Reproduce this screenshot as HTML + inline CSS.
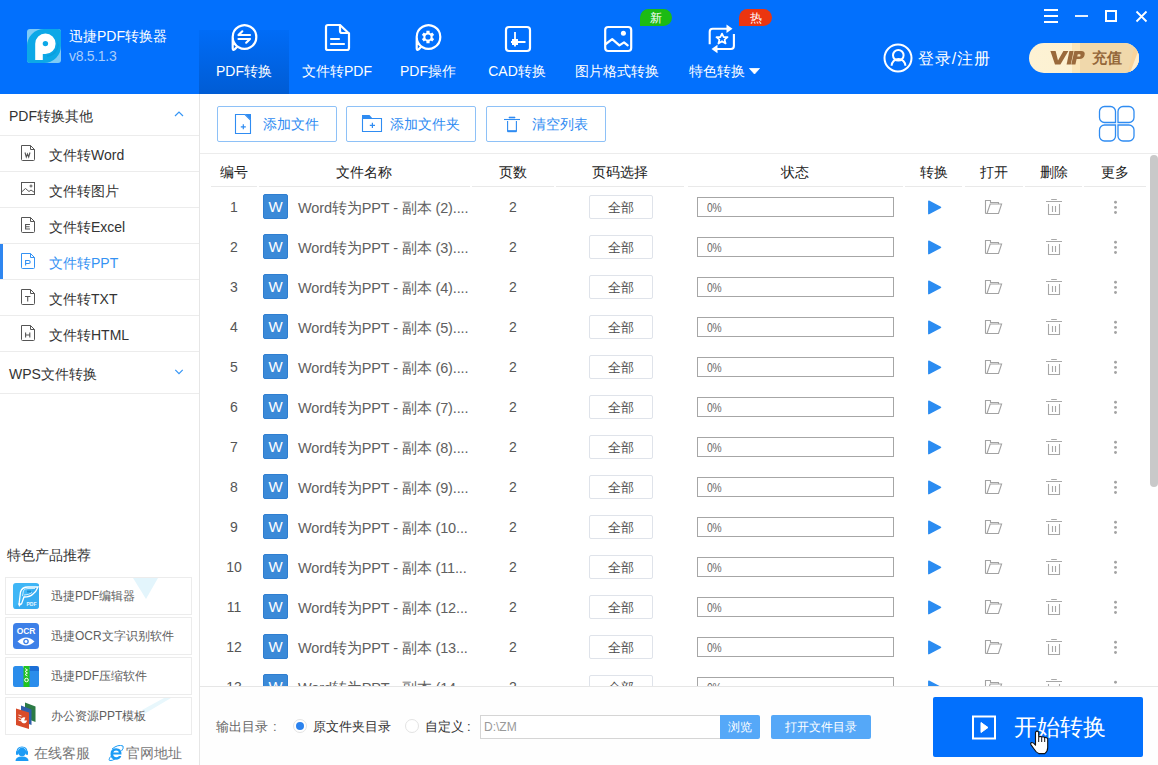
<!DOCTYPE html><html><head><meta charset="utf-8"><style>
*{box-sizing:border-box;margin:0;padding:0}
html,body{width:1158px;height:765px;overflow:hidden;background:#fff;font-family:"Liberation Sans",sans-serif;position:relative}
.a{position:absolute}
.nw{white-space:nowrap}
</style></head><body>
<div class="a" style="left:0;top:0;width:1158px;height:94px;background:#0270fd"></div>
<div class="a" style="left:199px;top:30px;width:90px;height:64px;background:linear-gradient(#006cf7,#005cd4)"></div>
<svg class="a" style="left:27px;top:29px" width="34" height="34" viewBox="0 0 34 34">
<defs><clipPath id="lc"><rect width="34" height="34" rx="3"/></clipPath></defs>
<g clip-path="url(#lc)"><rect width="34" height="34" fill="#7ecbf5"/>
<circle cx="17" cy="17" r="17" fill="#0ca8e7"/><rect x="17" y="0" width="17" height="17" fill="#0ca8e7"/><rect x="0" y="17" width="17" height="17" fill="#0ca8e7"/>
<path d="M20 26A11 11 0 0 0 30 12L32 16A13 13 0 0 1 20 28Z" fill="#0a98d8" opacity="0.6"/>
<path d="M8.2 31V14.8A10.2 10.2 0 1 1 18.4 25H15.8V31Z" fill="#fff"/>
<circle cx="18.4" cy="14.6" r="2.7" fill="#0ca8e7"/>
</g></svg>
<div class="a nw" style="left:69px;top:27px;font-size:14px;line-height:18px;color:#fff">迅捷PDF转换器</div>
<div class="a nw" style="left:69px;top:47px;font-size:14px;line-height:18px;letter-spacing:-0.3px;color:#a9cdfb">v8.5.1.3</div>
<div class="a nw" style="left:184px;top:62px;width:120px;text-align:center;font-size:14px;line-height:18px;color:#fff">PDF转换</div>
<div class="a nw" style="left:277px;top:62px;width:120px;text-align:center;font-size:14px;line-height:18px;color:#fff">文件转PDF</div>
<div class="a nw" style="left:368px;top:62px;width:120px;text-align:center;font-size:14px;line-height:18px;color:#fff">PDF操作</div>
<div class="a nw" style="left:457px;top:62px;width:120px;text-align:center;font-size:14px;line-height:18px;color:#fff">CAD转换</div>
<div class="a nw" style="left:557px;top:62px;width:120px;text-align:center;font-size:14px;line-height:18px;color:#fff">图片格式转换</div>
<div class="a nw" style="left:657px;top:62px;width:120px;text-align:center;font-size:14px;line-height:18px;color:#fff">特色转换</div>
<svg class="a" style="left:749px;top:68px" width="11" height="7"><path d="M0.5 0.5H10.5L5.5 6Z" stroke="#fff" stroke-width="0.8" stroke-linejoin="round" fill="#fff"/></svg>
<svg class="a" style="left:229px;top:22px" width="30" height="30" viewBox="0 0 30 30">
<path d="M3.7 15A11.8 11.8 0 1 1 3.7 15.01M3.7 15V26.3Q3.7 28.6 5.6 27.4L8.2 24.8" fill="none" stroke="#fff" stroke-width="2.2" stroke-linecap="round" stroke-linejoin="round"/>
<path d="M9.5 13H21M9.5 13L13.3 9.3M21 17H9.5M21 17L17.2 20.7" fill="none" stroke="#fff" stroke-width="2.2" stroke-linecap="round" stroke-linejoin="round"/></svg>
<svg class="a" style="left:323px;top:22px" width="28" height="30" viewBox="0 0 28 30">
<path d="M17 3H5Q3 3 3 5V26.5Q3 28 5 28H24Q26 28 26 26V11.5Z" fill="none" stroke="#fff" stroke-width="2.2" stroke-linecap="round" stroke-linejoin="round"/>
<path d="M17 3.5V9Q17 11 19 11H25.5" fill="none" stroke="#fff" stroke-width="2.2" stroke-linecap="round" stroke-linejoin="round"/>
<path d="M8 17H16M8 22H21" fill="none" stroke="#fff" stroke-width="2.2" stroke-linecap="round" stroke-linejoin="round"/></svg>
<svg class="a" style="left:413px;top:22px" width="30" height="30" viewBox="0 0 30 30">
<path d="M3.7 15A11.8 11.8 0 1 1 3.7 15.01M3.7 15V26.3Q3.7 28.6 5.6 27.4L8.2 24.8" fill="none" stroke="#fff" stroke-width="2.2" stroke-linecap="round" stroke-linejoin="round"/>
<g transform="translate(15,15)" fill="#fff">
<path d="M-1.6 -6.2H1.6V-4.2A4.5 4.5 0 0 1 2.8 -3.5L4.3 -4.6L6.2 -2.1L4.6 -0.9A4.5 4.5 0 0 1 4.6 0.9L6.2 2.1L4.3 4.6L2.8 3.5A4.5 4.5 0 0 1 1.6 4.2V6.2H-1.6V4.2A4.5 4.5 0 0 1 -2.8 3.5L-4.3 4.6L-6.2 2.1L-4.6 0.9A4.5 4.5 0 0 1 -4.6 -0.9L-6.2 -2.1L-4.3 -4.6L-2.8 -3.5A4.5 4.5 0 0 1 -1.6 -4.2Z"/>
<circle r="2.6" fill="#0270fd"/></g></svg>
<svg class="a" style="left:502px;top:22px" width="30" height="32" viewBox="0 0 30 32">
<rect x="4" y="5" width="24" height="24" rx="3" fill="none" stroke="#fff" stroke-width="2.2" stroke-linecap="round" stroke-linejoin="round"/>
<path d="M13 10V24.5M9 20H23.5" fill="none" stroke="#fff" stroke-width="1.8"/>
<rect x="10" y="17" width="6" height="6" fill="#fff"/></svg>
<svg class="a" style="left:602px;top:22px" width="32" height="32" viewBox="0 0 32 32">
<rect x="3.2" y="5" width="26" height="24" rx="3" fill="none" stroke="#fff" stroke-width="2.2" stroke-linecap="round" stroke-linejoin="round"/>
<path d="M3.8 22L10.2 17.2L17.4 23.4L22 20.3L25.7 23.4" fill="none" stroke="#fff" stroke-width="2.2" stroke-linecap="round" stroke-linejoin="round"/>
<circle cx="21.4" cy="11.3" r="2.5" fill="#fff"/></svg>
<svg class="a" style="left:706px;top:22px" width="32" height="32" viewBox="0 0 32 32">
<path d="M3.7 22.3V9.8Q3.7 6.8 6.7 6.8H21" fill="none" stroke="#fff" stroke-width="2.1"/>
<path d="M20.5 2.5L26.5 6.8L20.5 11Z" fill="#fff"/>
<path d="M27.9 12V24Q27.9 27 24.9 27H11" fill="none" stroke="#fff" stroke-width="2.1"/>
<path d="M11.5 22.7L5.5 27L11.5 31.3Z" fill="#fff"/>
<path d="M16 11.6L17.7 15.2H21.6L18.6 17.6L19.6 21.5L16 19.2L12.4 21.5L13.4 17.6L10.4 15.2H14.3Z" fill="none" stroke="#fff" stroke-width="1.7" stroke-linejoin="round"/></svg>
<div class="a" style="left:640px;top:9px;width:32px;height:17px;background:#1cbb14;border-radius:9px 9px 9px 0;color:#fff;font-size:12px;line-height:18px;text-align:center">新</div>
<div class="a" style="left:739px;top:9px;width:33px;height:17px;background:#eb3510;border-radius:9px 9px 9px 0;color:#fff;font-size:12px;line-height:18px;text-align:center">热</div>
<svg class="a" style="left:1040px;top:6px" width="115" height="22" viewBox="0 0 115 22" fill="none" stroke="#fff" stroke-width="2">
<path d="M4 4H18M4 10H18M4 16H18" stroke-width="1.8"/>
<path d="M35 10H48" stroke-width="1.8"/>
<rect x="66" y="5" width="10" height="10" stroke-width="2"/>
<path d="M96.5 5.5L106.5 15.5M106.5 5.5L96.5 15.5" stroke-width="1.8"/></svg>
<svg class="a" style="left:883px;top:43px" width="30" height="30" viewBox="0 0 30 30" fill="none" stroke="#fff" stroke-width="2">
<circle cx="15" cy="15" r="13.5"/><circle cx="15.3" cy="12.2" r="5.3"/><path d="M8.6 22.8A6.9 6.9 0 0 1 22.4 22.8"/></svg>
<div class="a nw" style="left:918px;top:49px;font-size:16px;line-height:20px;letter-spacing:0.9px;color:#fff">登录/注册</div>
<svg class="a" style="left:1029px;top:43px" width="110" height="30" viewBox="0 0 110 30">
<defs><clipPath id="vc"><rect width="110" height="30" rx="15"/></clipPath>
<linearGradient id="vg" x1="0" x2="1"><stop offset="0" stop-color="#fdf2d4"/><stop offset="1" stop-color="#fcf0cf"/></linearGradient></defs>
<g clip-path="url(#vc)"><rect width="110" height="30" fill="url(#vg)"/>
<path d="M43 0H110V30H43Z" fill="#f0d8ab"/>
<path d="M43 0H51V30H43Z" fill="#fae5b9"/>
<path d="M98.6 30L106.4 0H110V30Z" fill="#f8d49c"/>
<path d="M101 30L110 6V30Z" fill="#fcefd3"/>
</g></svg>
<svg class="a" style="left:1049px;top:50px" width="40" height="16" viewBox="0 0 40 16" fill="#9a6a3c">
<path d="M1.4 1H6.6L9 10.6L14.4 1H19.4L11.4 14.4H6Z"/>
<path d="M20.4 1H24.6L21.8 14.4H17.6Z"/>
<path d="M25.4 1H32.2Q36.4 1 35.6 5Q34.8 9 30.4 9H27.6L26.4 14.4H22.2ZM28.8 4.2L28.2 6.6H30.2Q31.4 6.6 31.6 5.4Q31.8 4.2 30.6 4.2Z" fill-rule="evenodd"/></svg>
<div class="a nw" style="left:1092px;top:48px;font-size:14.5px;line-height:20px;color:#94673a;font-weight:bold">充值</div>
<div class="a" style="left:199px;top:94px;width:1px;height:671px;background:#e6e6e6"></div>
<div class="a nw" style="left:9px;top:107px;font-size:14px;line-height:18px;color:#333">PDF转换其他</div>
<svg class="a" style="left:173px;top:109px" width="12" height="10"><path d="M2 7L6 3L10 7" fill="none" stroke="#3595f5" stroke-width="1.2"/></svg>
<div class="a" style="left:0;top:135px;width:199px;height:1px;background:#ececec"></div>
<div class="a" style="left:0;top:171px;width:199px;height:1px;background:#ececec"></div>
<div class="a" style="left:0;top:207px;width:199px;height:1px;background:#ececec"></div>
<div class="a" style="left:0;top:243px;width:199px;height:1px;background:#ececec"></div>
<div class="a" style="left:0;top:279px;width:199px;height:1px;background:#ececec"></div>
<div class="a" style="left:0;top:315px;width:199px;height:1px;background:#ececec"></div>
<div class="a" style="left:0;top:351px;width:199px;height:1px;background:#ececec"></div>
<div class="a nw" style="left:49px;top:146px;font-size:14px;line-height:18px;color:#333">文件转Word</div>
<svg class="a" style="left:20px;top:144px" width="16" height="18" viewBox="0 0 16 18" fill="none" stroke="#555" stroke-width="1">
<path d="M1.5 1.5H10.5L14.5 5.5V15.5Q14.5 16.5 13.5 16.5H2.5Q1.5 16.5 1.5 15.5Z"/><path d="M10.5 1.5V5.5H14.5"/><path d="M5 8.5L6.3 13L7.5 10L8.7 13L10 8.5" stroke-width="1.1"/></svg>
<div class="a nw" style="left:49px;top:182px;font-size:14px;line-height:18px;color:#333">文件转图片</div>
<svg class="a" style="left:20px;top:181px" width="16" height="16" viewBox="0 0 16 16" fill="none" stroke="#555" stroke-width="1">
<rect x="1.5" y="1.5" width="13" height="12"/><path d="M1.5 11L5.5 7.5L9 10.5L11 9L14.5 11.5"/><circle cx="11" cy="5" r="1"/></svg>
<div class="a nw" style="left:49px;top:218px;font-size:14px;line-height:18px;color:#333">文件转Excel</div>
<svg class="a" style="left:20px;top:216px" width="16" height="18" viewBox="0 0 16 18" fill="none" stroke="#555" stroke-width="1">
<path d="M1.5 1.5H10.5L14.5 5.5V15.5Q14.5 16.5 13.5 16.5H2.5Q1.5 16.5 1.5 15.5Z"/><path d="M10.5 1.5V5.5H14.5"/><path d="M10 8.5H5.6V13H10M5.6 10.7H9.6" stroke-width="1.1"/></svg>
<div class="a nw" style="left:49px;top:254px;font-size:14px;line-height:18px;color:#3592f3">文件转PPT</div>
<svg class="a" style="left:20px;top:252px" width="16" height="18" viewBox="0 0 16 18" fill="none" stroke="#3592f3" stroke-width="1">
<path d="M1.5 1.5H10.5L14.5 5.5V15.5Q14.5 16.5 13.5 16.5H2.5Q1.5 16.5 1.5 15.5Z"/><path d="M10.5 1.5V5.5H14.5"/><path d="M5.6 13.5V8.5H8.6Q10.2 8.5 10.2 10Q10.2 11.5 8.6 11.5H5.6" stroke-width="1.1"/></svg>
<div class="a" style="left:0;top:244px;width:3px;height:35px;background:#2f86f0"></div>
<div class="a nw" style="left:49px;top:290px;font-size:14px;line-height:18px;color:#333">文件转TXT</div>
<svg class="a" style="left:20px;top:288px" width="16" height="18" viewBox="0 0 16 18" fill="none" stroke="#555" stroke-width="1">
<path d="M1.5 1.5H10.5L14.5 5.5V15.5Q14.5 16.5 13.5 16.5H2.5Q1.5 16.5 1.5 15.5Z"/><path d="M10.5 1.5V5.5H14.5"/><path d="M5 8.5H10.4M7.7 8.5V13.5" stroke-width="1.1"/></svg>
<div class="a nw" style="left:49px;top:326px;font-size:14px;line-height:18px;color:#333">文件转HTML</div>
<svg class="a" style="left:20px;top:324px" width="16" height="18" viewBox="0 0 16 18" fill="none" stroke="#555" stroke-width="1">
<path d="M1.5 1.5H10.5L14.5 5.5V15.5Q14.5 16.5 13.5 16.5H2.5Q1.5 16.5 1.5 15.5Z"/><path d="M10.5 1.5V5.5H14.5"/><path d="M5.6 8.5V13.5M9.8 8.5V13.5M5.6 11H9.8" stroke-width="1.1"/></svg>
<div class="a nw" style="left:9px;top:365px;font-size:14px;line-height:18px;color:#333">WPS文件转换</div>
<svg class="a" style="left:173px;top:367px" width="12" height="10"><path d="M2.3 2.8L6 6.6L9.7 2.8" fill="none" stroke="#3595f5" stroke-width="1.2"/></svg>
<div class="a" style="left:0;top:393px;width:199px;height:1px;background:#ececec"></div>
<div class="a nw" style="left:7px;top:546px;font-size:14px;line-height:18px;color:#333">特色产品推荐</div>
<svg class="a" style="left:130px;top:577px" width="50" height="140" viewBox="0 0 50 140"><path d="M3 1H28L16 22Z" fill="#e3f5fc"/><path d="M14 137L41 121H34L12 133Z" fill="#e8f7fc"/></svg>
<div class="a" style="left:5px;top:577px;width:187px;height:38px;border:1px solid #ececec"></div>
<div class="a nw" style="left:51px;top:588px;font-size:12px;line-height:17px;color:#5e5e5e">迅捷PDF编辑器</div>
<div class="a" style="left:5px;top:617px;width:187px;height:38px;border:1px solid #ececec"></div>
<div class="a nw" style="left:51px;top:628px;font-size:12px;line-height:17px;color:#5e5e5e">迅捷OCR文字识别软件</div>
<div class="a" style="left:5px;top:657px;width:187px;height:38px;border:1px solid #ececec"></div>
<div class="a nw" style="left:51px;top:668px;font-size:12px;line-height:17px;color:#5e5e5e">迅捷PDF压缩软件</div>
<div class="a" style="left:5px;top:697px;width:187px;height:38px;border:1px solid #ececec"></div>
<div class="a nw" style="left:51px;top:708px;font-size:12px;line-height:17px;color:#5e5e5e">办公资源PPT模板</div>
<svg class="a" style="left:13px;top:583px" width="26" height="26" viewBox="0 0 26 26">
<defs><clipPath id="p1"><rect width="26" height="26" rx="3"/></clipPath></defs>
<g clip-path="url(#p1)"><rect width="26" height="26" fill="#3fb6f6"/><path d="M0 26L26 0V26Z" fill="#35a8ef" opacity="0.7"/></g>
<path d="M6 21.5L7.5 9Q9 4 15 4H25Q23 9 20 11Q17 14 11 14L8.5 21Z" fill="none" stroke="#fff" stroke-width="1.3"/>
<path d="M9.5 13L10.5 7.5Q12 5.5 15 5.5H22M11 12Q16 12 19 9.5" fill="none" stroke="#d8f1ff" stroke-width="0.9"/>
<rect x="14" y="7.5" width="4" height="2" fill="#1d8fd0"/>
<path d="M5.5 20L8.5 21L6 24Z" fill="#fff"/>
<text x="13.5" y="23" font-size="5" fill="#e8f6ff" font-family="Liberation Sans" font-weight="bold">PDF</text></svg>
<svg class="a" style="left:13px;top:623px" width="26" height="26" viewBox="0 0 26 26"><rect width="26" height="26" rx="3.5" fill="#3d80e8"/>
<text x="13" y="10.5" text-anchor="middle" font-size="8.5" fill="#fff" font-family="Liberation Sans" font-weight="bold" letter-spacing="-0.2">OCR</text>
<path d="M4.5 18.5Q13 10.5 21.5 18.5Q13 26.5 4.5 18.5Z" fill="#fff"/><circle cx="13" cy="18.5" r="2.8" fill="#3d80e8"/><circle cx="13" cy="18.5" r="1.4" fill="#fff"/></svg>
<svg class="a" style="left:13px;top:665px" width="26" height="23" viewBox="0 0 26 23">
<path d="M0 3.5Q0 1 2.5 1H9.5L11.5 4H24Q26 4 26 6V20Q26 22 24 22H2Q0 22 0 20Z" fill="#2b8deb"/>
<path d="M16 1H24Q26 1 26 3V6H17Z" fill="#1c6fd6"/>
<rect x="10.5" y="1" width="6" height="21" fill="#22c41f"/>
<path d="M12 3.5L14.5 5L12 6.5L14.5 8L12 9.5L14.5 11" fill="none" stroke="#fff" stroke-width="0.9"/>
<circle cx="13.5" cy="15" r="1.8" fill="none" stroke="#fff" stroke-width="1"/></svg>
<svg class="a" style="left:15px;top:702px" width="22" height="28" viewBox="0 0 22 28">
<path d="M10 0.5L20.5 4.5V20L10 16Z" fill="#2b7a45"/>
<path d="M6 3.5L16.5 7.5V23L6 19Z" fill="#2f5eab"/>
<path d="M1 6.5L14 10.5V27L1 23Z" fill="#d84b2a"/>
<path d="M10.3 15.5A3 3 0 1 0 12 18.5H9.2Z" fill="#fff"/>
<path d="M3.5 13L6.5 14M3.5 15.5L6.5 16.5M3.5 18L6.5 19" stroke="#fff" stroke-width="0.9"/></svg>
<svg class="a" style="left:15px;top:746px" width="14" height="15" viewBox="0 0 14 15">
<circle cx="7" cy="6" r="4.2" fill="#1b9bf5"/><path d="M2 6.5Q2 1 7 1Q12 1 12 6.5" fill="none" stroke="#1b9bf5" stroke-width="1.2"/>
<rect x="1" y="5" width="2" height="4" rx="1" fill="#1b9bf5"/><rect x="11" y="5" width="2" height="4" rx="1" fill="#1b9bf5"/>
<path d="M0.5 15Q0.5 10.5 7 10.5Q13.5 10.5 13.5 15Z" fill="#1b9bf5"/></svg>
<div class="a nw" style="left:34px;top:744px;font-size:14px;line-height:18px;color:#777">在线客服</div>
<svg class="a" style="left:108px;top:745px" width="16" height="16" viewBox="0 0 16 16">
<path d="M13.5 9.5H5.2Q5.6 12.3 8.2 12.3Q10 12.3 11 11H13.3Q12 14.8 8 14.8Q2.5 14.8 2.5 9Q2.5 3.2 8.2 3.2Q13.8 3.2 13.5 9.5ZM5.3 7.6H10.9Q10.7 5.6 8.1 5.6Q5.7 5.6 5.3 7.6Z" fill="#1b9bf5"/>
<path d="M4 4Q10 -1 15 1Q16 3 13.5 6M2.5 11.5Q0 15.5 2 15.5Q4 15.8 7 14" fill="none" stroke="#1b9bf5" stroke-width="1"/></svg>
<div class="a nw" style="left:126px;top:744px;font-size:14px;line-height:18px;color:#777">官网地址</div>
<div class="a" style="left:217px;top:106px;width:120px;height:36px;border:1px solid #8ec1f7;border-radius:2px"></div>
<div class="a nw" style="left:263px;top:115px;font-size:14px;line-height:18px;color:#2f8cf2">添加文件</div>
<div class="a" style="left:346px;top:106px;width:130px;height:36px;border:1px solid #8ec1f7;border-radius:2px"></div>
<div class="a nw" style="left:390px;top:115px;font-size:14px;line-height:18px;color:#2f8cf2">添加文件夹</div>
<div class="a" style="left:486px;top:106px;width:120px;height:36px;border:1px solid #8ec1f7;border-radius:2px"></div>
<div class="a nw" style="left:532px;top:115px;font-size:14px;line-height:18px;color:#2f8cf2">清空列表</div>
<svg class="a" style="left:230px;top:110px" width="26" height="28" viewBox="0 0 26 28" fill="none" stroke="#2f8cf2" stroke-width="1.1"><path d="M5.5 4.5H15L20.5 10V23.5H5.5Z"/><path d="M15 4L21 10.2V4Z" fill="#2f8cf2" stroke="none"/><path d="M10.8 16.8H15.8M13.3 14.3V19.3" stroke-width="1.2"/></svg>
<svg class="a" style="left:358px;top:110px" width="28" height="26" viewBox="0 0 28 26" fill="none" stroke="#2f8cf2" stroke-width="1.1"><path d="M4 5H11.5L14.3 8.2H4Z" fill="#2f8cf2" stroke="none"/><path d="M4.5 8.5H23.5V21.5H4.5Z"/><path d="M11.8 15.4H17M14.4 12.8V18" stroke-width="1.2"/></svg>
<svg class="a" style="left:500px;top:112px" width="24" height="24" viewBox="0 0 24 24" fill="none" stroke="#2f8cf2" stroke-width="1.1"><path d="M9 5H15V6H9Z" fill="#2f8cf2" stroke-width="0.6"/><path d="M4 7.5H20"/><path d="M7.6 9V19.2H16.4V9"/><path d="M7.6 19.2H16.4" stroke-width="2"/></svg>
<svg class="a" style="left:1098px;top:105px" width="38" height="38" viewBox="0 0 38 38" fill="none" stroke="#2f8cf2" stroke-width="1.3"><path d="M17.5 17.5H6.5A5 5 0 0 1 1.5 12.5V6.5A5 5 0 0 1 6.5 1.5H12.5A5 5 0 0 1 17.5 6.5Z"/><path d="M20 17.5V6.5A5 5 0 0 1 25 1.5H31A5 5 0 0 1 36 6.5V12.5A5 5 0 0 1 31 17.5Z"/><path d="M17.5 20V31A5 5 0 0 1 12.5 36H6.5A5 5 0 0 1 1.5 31V25A5 5 0 0 1 6.5 20Z"/><path d="M20 20H31A5 5 0 0 1 36 25V31A5 5 0 0 1 31 36H25A5 5 0 0 1 20 31Z"/></svg>
<div class="a" style="left:200px;top:153px;width:958px;height:1px;background:#ececec"></div>
<div class="a nw" style="left:194px;top:163px;width:80px;text-align:center;font-size:14px;line-height:18px;color:#222">编号</div>
<div class="a" style="left:211px;top:186px;width:46px;height:1px;background:#e9e9e9"></div>
<div class="a nw" style="left:324px;top:163px;width:80px;text-align:center;font-size:14px;line-height:18px;color:#222">文件名称</div>
<div class="a" style="left:259px;top:186px;width:211px;height:1px;background:#e9e9e9"></div>
<div class="a nw" style="left:473px;top:163px;width:80px;text-align:center;font-size:14px;line-height:18px;color:#222">页数</div>
<div class="a" style="left:472px;top:186px;width:82px;height:1px;background:#e9e9e9"></div>
<div class="a nw" style="left:580px;top:163px;width:80px;text-align:center;font-size:14px;line-height:18px;color:#222">页码选择</div>
<div class="a" style="left:556px;top:186px;width:128px;height:1px;background:#e9e9e9"></div>
<div class="a nw" style="left:755px;top:163px;width:80px;text-align:center;font-size:14px;line-height:18px;color:#222">状态</div>
<div class="a" style="left:688px;top:186px;width:215px;height:1px;background:#e9e9e9"></div>
<div class="a nw" style="left:894px;top:163px;width:80px;text-align:center;font-size:14px;line-height:18px;color:#222">转换</div>
<div class="a" style="left:905px;top:186px;width:57px;height:1px;background:#e9e9e9"></div>
<div class="a nw" style="left:954px;top:163px;width:80px;text-align:center;font-size:14px;line-height:18px;color:#222">打开</div>
<div class="a" style="left:965px;top:186px;width:58px;height:1px;background:#e9e9e9"></div>
<div class="a nw" style="left:1014px;top:163px;width:80px;text-align:center;font-size:14px;line-height:18px;color:#222">删除</div>
<div class="a" style="left:1025px;top:186px;width:57px;height:1px;background:#e9e9e9"></div>
<div class="a nw" style="left:1075px;top:163px;width:80px;text-align:center;font-size:14px;line-height:18px;color:#222">更多</div>
<div class="a" style="left:1084px;top:186px;width:62px;height:1px;background:#e9e9e9"></div>
<div class="a" style="left:1150px;top:155px;width:8px;height:332px;background:#c9c9c9;border-radius:4px"></div>
<div class="a" style="left:200px;top:187px;width:949px;height:499px;overflow:hidden">
<div class="a nw" style="left:4px;top:11px;width:60px;text-align:center;font-size:14px;line-height:18px;color:#555">1</div>
<div class="a" style="left:63px;top:7px;width:25px;height:25px;background:#3b8ad8;border:1px solid #2f7ed0;border-radius:2px;color:#fff;font-size:15px;line-height:23px;text-align:center">W</div>
<div class="a nw" style="left:98px;top:12px;font-size:14.5px;line-height:18px;letter-spacing:-0.12px;color:#606060">Word转为PPT - 副本 (2)....</div>
<div class="a nw" style="left:283px;top:11px;width:60px;text-align:center;font-size:14px;line-height:18px;color:#555">2</div>
<div class="a" style="left:389px;top:8px;width:64px;height:24px;border:1px solid #dfe3ea;border-radius:2px;text-align:center;font-size:13px;line-height:24px;color:#4a4a4a">全部</div>
<div class="a" style="left:497px;top:10px;width:197px;height:20px;border:1px solid #a6a6a6;font-size:13.5px;line-height:19px;letter-spacing:-0.2px;color:#666;padding-left:9px"><span style="display:inline-block;transform:scaleX(0.76);transform-origin:0 50%">0%</span></div>
<svg class="a" style="left:727px;top:12px" width="16" height="17"><path d="M1.8 2.2L13.6 8.3L1.8 14.7Z" fill="#2b8cf1" stroke="#2b8cf1" stroke-width="1.4" stroke-linejoin="round"/></svg>
<svg class="a" style="left:784px;top:12px" width="20" height="17" viewBox="0 0 20 17" fill="none" stroke="#a2a2a2" stroke-width="1.1"><path d="M1.5 14.5V1.5H6.5V3.5H14.5V5"/><path d="M1.5 14.5H14.5L17.6 5H6.2L3 14.5"/></svg>
<svg class="a" style="left:845px;top:10px" width="18" height="20" viewBox="0 0 18 20" fill="none" stroke="#a8a8a8" stroke-width="1.1"><path d="M6.2 2.5H11.8M1 4.5H17"/><path d="M3.5 7V17.5H14.5V7"/><path d="M7.5 9V15M10.5 9V15"/></svg>
<svg class="a" style="left:913px;top:13px" width="5" height="16"><circle cx="2.5" cy="2.3" r="1.45" fill="#a3a3a3"/><circle cx="2.5" cy="7.4" r="1.45" fill="#a3a3a3"/><circle cx="2.5" cy="12.5" r="1.45" fill="#a3a3a3"/></svg>
<div class="a nw" style="left:4px;top:51px;width:60px;text-align:center;font-size:14px;line-height:18px;color:#555">2</div>
<div class="a" style="left:63px;top:47px;width:25px;height:25px;background:#3b8ad8;border:1px solid #2f7ed0;border-radius:2px;color:#fff;font-size:15px;line-height:23px;text-align:center">W</div>
<div class="a nw" style="left:98px;top:52px;font-size:14.5px;line-height:18px;letter-spacing:-0.12px;color:#606060">Word转为PPT - 副本 (3)....</div>
<div class="a nw" style="left:283px;top:51px;width:60px;text-align:center;font-size:14px;line-height:18px;color:#555">2</div>
<div class="a" style="left:389px;top:48px;width:64px;height:24px;border:1px solid #dfe3ea;border-radius:2px;text-align:center;font-size:13px;line-height:24px;color:#4a4a4a">全部</div>
<div class="a" style="left:497px;top:50px;width:197px;height:20px;border:1px solid #a6a6a6;font-size:13.5px;line-height:19px;letter-spacing:-0.2px;color:#666;padding-left:9px"><span style="display:inline-block;transform:scaleX(0.76);transform-origin:0 50%">0%</span></div>
<svg class="a" style="left:727px;top:52px" width="16" height="17"><path d="M1.8 2.2L13.6 8.3L1.8 14.7Z" fill="#2b8cf1" stroke="#2b8cf1" stroke-width="1.4" stroke-linejoin="round"/></svg>
<svg class="a" style="left:784px;top:52px" width="20" height="17" viewBox="0 0 20 17" fill="none" stroke="#a2a2a2" stroke-width="1.1"><path d="M1.5 14.5V1.5H6.5V3.5H14.5V5"/><path d="M1.5 14.5H14.5L17.6 5H6.2L3 14.5"/></svg>
<svg class="a" style="left:845px;top:50px" width="18" height="20" viewBox="0 0 18 20" fill="none" stroke="#a8a8a8" stroke-width="1.1"><path d="M6.2 2.5H11.8M1 4.5H17"/><path d="M3.5 7V17.5H14.5V7"/><path d="M7.5 9V15M10.5 9V15"/></svg>
<svg class="a" style="left:913px;top:53px" width="5" height="16"><circle cx="2.5" cy="2.3" r="1.45" fill="#a3a3a3"/><circle cx="2.5" cy="7.4" r="1.45" fill="#a3a3a3"/><circle cx="2.5" cy="12.5" r="1.45" fill="#a3a3a3"/></svg>
<div class="a nw" style="left:4px;top:91px;width:60px;text-align:center;font-size:14px;line-height:18px;color:#555">3</div>
<div class="a" style="left:63px;top:87px;width:25px;height:25px;background:#3b8ad8;border:1px solid #2f7ed0;border-radius:2px;color:#fff;font-size:15px;line-height:23px;text-align:center">W</div>
<div class="a nw" style="left:98px;top:92px;font-size:14.5px;line-height:18px;letter-spacing:-0.12px;color:#606060">Word转为PPT - 副本 (4)....</div>
<div class="a nw" style="left:283px;top:91px;width:60px;text-align:center;font-size:14px;line-height:18px;color:#555">2</div>
<div class="a" style="left:389px;top:88px;width:64px;height:24px;border:1px solid #dfe3ea;border-radius:2px;text-align:center;font-size:13px;line-height:24px;color:#4a4a4a">全部</div>
<div class="a" style="left:497px;top:90px;width:197px;height:20px;border:1px solid #a6a6a6;font-size:13.5px;line-height:19px;letter-spacing:-0.2px;color:#666;padding-left:9px"><span style="display:inline-block;transform:scaleX(0.76);transform-origin:0 50%">0%</span></div>
<svg class="a" style="left:727px;top:92px" width="16" height="17"><path d="M1.8 2.2L13.6 8.3L1.8 14.7Z" fill="#2b8cf1" stroke="#2b8cf1" stroke-width="1.4" stroke-linejoin="round"/></svg>
<svg class="a" style="left:784px;top:92px" width="20" height="17" viewBox="0 0 20 17" fill="none" stroke="#a2a2a2" stroke-width="1.1"><path d="M1.5 14.5V1.5H6.5V3.5H14.5V5"/><path d="M1.5 14.5H14.5L17.6 5H6.2L3 14.5"/></svg>
<svg class="a" style="left:845px;top:90px" width="18" height="20" viewBox="0 0 18 20" fill="none" stroke="#a8a8a8" stroke-width="1.1"><path d="M6.2 2.5H11.8M1 4.5H17"/><path d="M3.5 7V17.5H14.5V7"/><path d="M7.5 9V15M10.5 9V15"/></svg>
<svg class="a" style="left:913px;top:93px" width="5" height="16"><circle cx="2.5" cy="2.3" r="1.45" fill="#a3a3a3"/><circle cx="2.5" cy="7.4" r="1.45" fill="#a3a3a3"/><circle cx="2.5" cy="12.5" r="1.45" fill="#a3a3a3"/></svg>
<div class="a nw" style="left:4px;top:131px;width:60px;text-align:center;font-size:14px;line-height:18px;color:#555">4</div>
<div class="a" style="left:63px;top:127px;width:25px;height:25px;background:#3b8ad8;border:1px solid #2f7ed0;border-radius:2px;color:#fff;font-size:15px;line-height:23px;text-align:center">W</div>
<div class="a nw" style="left:98px;top:132px;font-size:14.5px;line-height:18px;letter-spacing:-0.12px;color:#606060">Word转为PPT - 副本 (5)....</div>
<div class="a nw" style="left:283px;top:131px;width:60px;text-align:center;font-size:14px;line-height:18px;color:#555">2</div>
<div class="a" style="left:389px;top:128px;width:64px;height:24px;border:1px solid #dfe3ea;border-radius:2px;text-align:center;font-size:13px;line-height:24px;color:#4a4a4a">全部</div>
<div class="a" style="left:497px;top:130px;width:197px;height:20px;border:1px solid #a6a6a6;font-size:13.5px;line-height:19px;letter-spacing:-0.2px;color:#666;padding-left:9px"><span style="display:inline-block;transform:scaleX(0.76);transform-origin:0 50%">0%</span></div>
<svg class="a" style="left:727px;top:132px" width="16" height="17"><path d="M1.8 2.2L13.6 8.3L1.8 14.7Z" fill="#2b8cf1" stroke="#2b8cf1" stroke-width="1.4" stroke-linejoin="round"/></svg>
<svg class="a" style="left:784px;top:132px" width="20" height="17" viewBox="0 0 20 17" fill="none" stroke="#a2a2a2" stroke-width="1.1"><path d="M1.5 14.5V1.5H6.5V3.5H14.5V5"/><path d="M1.5 14.5H14.5L17.6 5H6.2L3 14.5"/></svg>
<svg class="a" style="left:845px;top:130px" width="18" height="20" viewBox="0 0 18 20" fill="none" stroke="#a8a8a8" stroke-width="1.1"><path d="M6.2 2.5H11.8M1 4.5H17"/><path d="M3.5 7V17.5H14.5V7"/><path d="M7.5 9V15M10.5 9V15"/></svg>
<svg class="a" style="left:913px;top:133px" width="5" height="16"><circle cx="2.5" cy="2.3" r="1.45" fill="#a3a3a3"/><circle cx="2.5" cy="7.4" r="1.45" fill="#a3a3a3"/><circle cx="2.5" cy="12.5" r="1.45" fill="#a3a3a3"/></svg>
<div class="a nw" style="left:4px;top:171px;width:60px;text-align:center;font-size:14px;line-height:18px;color:#555">5</div>
<div class="a" style="left:63px;top:167px;width:25px;height:25px;background:#3b8ad8;border:1px solid #2f7ed0;border-radius:2px;color:#fff;font-size:15px;line-height:23px;text-align:center">W</div>
<div class="a nw" style="left:98px;top:172px;font-size:14.5px;line-height:18px;letter-spacing:-0.12px;color:#606060">Word转为PPT - 副本 (6)....</div>
<div class="a nw" style="left:283px;top:171px;width:60px;text-align:center;font-size:14px;line-height:18px;color:#555">2</div>
<div class="a" style="left:389px;top:168px;width:64px;height:24px;border:1px solid #dfe3ea;border-radius:2px;text-align:center;font-size:13px;line-height:24px;color:#4a4a4a">全部</div>
<div class="a" style="left:497px;top:170px;width:197px;height:20px;border:1px solid #a6a6a6;font-size:13.5px;line-height:19px;letter-spacing:-0.2px;color:#666;padding-left:9px"><span style="display:inline-block;transform:scaleX(0.76);transform-origin:0 50%">0%</span></div>
<svg class="a" style="left:727px;top:172px" width="16" height="17"><path d="M1.8 2.2L13.6 8.3L1.8 14.7Z" fill="#2b8cf1" stroke="#2b8cf1" stroke-width="1.4" stroke-linejoin="round"/></svg>
<svg class="a" style="left:784px;top:172px" width="20" height="17" viewBox="0 0 20 17" fill="none" stroke="#a2a2a2" stroke-width="1.1"><path d="M1.5 14.5V1.5H6.5V3.5H14.5V5"/><path d="M1.5 14.5H14.5L17.6 5H6.2L3 14.5"/></svg>
<svg class="a" style="left:845px;top:170px" width="18" height="20" viewBox="0 0 18 20" fill="none" stroke="#a8a8a8" stroke-width="1.1"><path d="M6.2 2.5H11.8M1 4.5H17"/><path d="M3.5 7V17.5H14.5V7"/><path d="M7.5 9V15M10.5 9V15"/></svg>
<svg class="a" style="left:913px;top:173px" width="5" height="16"><circle cx="2.5" cy="2.3" r="1.45" fill="#a3a3a3"/><circle cx="2.5" cy="7.4" r="1.45" fill="#a3a3a3"/><circle cx="2.5" cy="12.5" r="1.45" fill="#a3a3a3"/></svg>
<div class="a nw" style="left:4px;top:211px;width:60px;text-align:center;font-size:14px;line-height:18px;color:#555">6</div>
<div class="a" style="left:63px;top:207px;width:25px;height:25px;background:#3b8ad8;border:1px solid #2f7ed0;border-radius:2px;color:#fff;font-size:15px;line-height:23px;text-align:center">W</div>
<div class="a nw" style="left:98px;top:212px;font-size:14.5px;line-height:18px;letter-spacing:-0.12px;color:#606060">Word转为PPT - 副本 (7)....</div>
<div class="a nw" style="left:283px;top:211px;width:60px;text-align:center;font-size:14px;line-height:18px;color:#555">2</div>
<div class="a" style="left:389px;top:208px;width:64px;height:24px;border:1px solid #dfe3ea;border-radius:2px;text-align:center;font-size:13px;line-height:24px;color:#4a4a4a">全部</div>
<div class="a" style="left:497px;top:210px;width:197px;height:20px;border:1px solid #a6a6a6;font-size:13.5px;line-height:19px;letter-spacing:-0.2px;color:#666;padding-left:9px"><span style="display:inline-block;transform:scaleX(0.76);transform-origin:0 50%">0%</span></div>
<svg class="a" style="left:727px;top:212px" width="16" height="17"><path d="M1.8 2.2L13.6 8.3L1.8 14.7Z" fill="#2b8cf1" stroke="#2b8cf1" stroke-width="1.4" stroke-linejoin="round"/></svg>
<svg class="a" style="left:784px;top:212px" width="20" height="17" viewBox="0 0 20 17" fill="none" stroke="#a2a2a2" stroke-width="1.1"><path d="M1.5 14.5V1.5H6.5V3.5H14.5V5"/><path d="M1.5 14.5H14.5L17.6 5H6.2L3 14.5"/></svg>
<svg class="a" style="left:845px;top:210px" width="18" height="20" viewBox="0 0 18 20" fill="none" stroke="#a8a8a8" stroke-width="1.1"><path d="M6.2 2.5H11.8M1 4.5H17"/><path d="M3.5 7V17.5H14.5V7"/><path d="M7.5 9V15M10.5 9V15"/></svg>
<svg class="a" style="left:913px;top:213px" width="5" height="16"><circle cx="2.5" cy="2.3" r="1.45" fill="#a3a3a3"/><circle cx="2.5" cy="7.4" r="1.45" fill="#a3a3a3"/><circle cx="2.5" cy="12.5" r="1.45" fill="#a3a3a3"/></svg>
<div class="a nw" style="left:4px;top:251px;width:60px;text-align:center;font-size:14px;line-height:18px;color:#555">7</div>
<div class="a" style="left:63px;top:247px;width:25px;height:25px;background:#3b8ad8;border:1px solid #2f7ed0;border-radius:2px;color:#fff;font-size:15px;line-height:23px;text-align:center">W</div>
<div class="a nw" style="left:98px;top:252px;font-size:14.5px;line-height:18px;letter-spacing:-0.12px;color:#606060">Word转为PPT - 副本 (8)....</div>
<div class="a nw" style="left:283px;top:251px;width:60px;text-align:center;font-size:14px;line-height:18px;color:#555">2</div>
<div class="a" style="left:389px;top:248px;width:64px;height:24px;border:1px solid #dfe3ea;border-radius:2px;text-align:center;font-size:13px;line-height:24px;color:#4a4a4a">全部</div>
<div class="a" style="left:497px;top:250px;width:197px;height:20px;border:1px solid #a6a6a6;font-size:13.5px;line-height:19px;letter-spacing:-0.2px;color:#666;padding-left:9px"><span style="display:inline-block;transform:scaleX(0.76);transform-origin:0 50%">0%</span></div>
<svg class="a" style="left:727px;top:252px" width="16" height="17"><path d="M1.8 2.2L13.6 8.3L1.8 14.7Z" fill="#2b8cf1" stroke="#2b8cf1" stroke-width="1.4" stroke-linejoin="round"/></svg>
<svg class="a" style="left:784px;top:252px" width="20" height="17" viewBox="0 0 20 17" fill="none" stroke="#a2a2a2" stroke-width="1.1"><path d="M1.5 14.5V1.5H6.5V3.5H14.5V5"/><path d="M1.5 14.5H14.5L17.6 5H6.2L3 14.5"/></svg>
<svg class="a" style="left:845px;top:250px" width="18" height="20" viewBox="0 0 18 20" fill="none" stroke="#a8a8a8" stroke-width="1.1"><path d="M6.2 2.5H11.8M1 4.5H17"/><path d="M3.5 7V17.5H14.5V7"/><path d="M7.5 9V15M10.5 9V15"/></svg>
<svg class="a" style="left:913px;top:253px" width="5" height="16"><circle cx="2.5" cy="2.3" r="1.45" fill="#a3a3a3"/><circle cx="2.5" cy="7.4" r="1.45" fill="#a3a3a3"/><circle cx="2.5" cy="12.5" r="1.45" fill="#a3a3a3"/></svg>
<div class="a nw" style="left:4px;top:291px;width:60px;text-align:center;font-size:14px;line-height:18px;color:#555">8</div>
<div class="a" style="left:63px;top:287px;width:25px;height:25px;background:#3b8ad8;border:1px solid #2f7ed0;border-radius:2px;color:#fff;font-size:15px;line-height:23px;text-align:center">W</div>
<div class="a nw" style="left:98px;top:292px;font-size:14.5px;line-height:18px;letter-spacing:-0.12px;color:#606060">Word转为PPT - 副本 (9)....</div>
<div class="a nw" style="left:283px;top:291px;width:60px;text-align:center;font-size:14px;line-height:18px;color:#555">2</div>
<div class="a" style="left:389px;top:288px;width:64px;height:24px;border:1px solid #dfe3ea;border-radius:2px;text-align:center;font-size:13px;line-height:24px;color:#4a4a4a">全部</div>
<div class="a" style="left:497px;top:290px;width:197px;height:20px;border:1px solid #a6a6a6;font-size:13.5px;line-height:19px;letter-spacing:-0.2px;color:#666;padding-left:9px"><span style="display:inline-block;transform:scaleX(0.76);transform-origin:0 50%">0%</span></div>
<svg class="a" style="left:727px;top:292px" width="16" height="17"><path d="M1.8 2.2L13.6 8.3L1.8 14.7Z" fill="#2b8cf1" stroke="#2b8cf1" stroke-width="1.4" stroke-linejoin="round"/></svg>
<svg class="a" style="left:784px;top:292px" width="20" height="17" viewBox="0 0 20 17" fill="none" stroke="#a2a2a2" stroke-width="1.1"><path d="M1.5 14.5V1.5H6.5V3.5H14.5V5"/><path d="M1.5 14.5H14.5L17.6 5H6.2L3 14.5"/></svg>
<svg class="a" style="left:845px;top:290px" width="18" height="20" viewBox="0 0 18 20" fill="none" stroke="#a8a8a8" stroke-width="1.1"><path d="M6.2 2.5H11.8M1 4.5H17"/><path d="M3.5 7V17.5H14.5V7"/><path d="M7.5 9V15M10.5 9V15"/></svg>
<svg class="a" style="left:913px;top:293px" width="5" height="16"><circle cx="2.5" cy="2.3" r="1.45" fill="#a3a3a3"/><circle cx="2.5" cy="7.4" r="1.45" fill="#a3a3a3"/><circle cx="2.5" cy="12.5" r="1.45" fill="#a3a3a3"/></svg>
<div class="a nw" style="left:4px;top:331px;width:60px;text-align:center;font-size:14px;line-height:18px;color:#555">9</div>
<div class="a" style="left:63px;top:327px;width:25px;height:25px;background:#3b8ad8;border:1px solid #2f7ed0;border-radius:2px;color:#fff;font-size:15px;line-height:23px;text-align:center">W</div>
<div class="a nw" style="left:98px;top:332px;font-size:14.5px;line-height:18px;letter-spacing:-0.12px;color:#606060">Word转为PPT - 副本 (10...</div>
<div class="a nw" style="left:283px;top:331px;width:60px;text-align:center;font-size:14px;line-height:18px;color:#555">2</div>
<div class="a" style="left:389px;top:328px;width:64px;height:24px;border:1px solid #dfe3ea;border-radius:2px;text-align:center;font-size:13px;line-height:24px;color:#4a4a4a">全部</div>
<div class="a" style="left:497px;top:330px;width:197px;height:20px;border:1px solid #a6a6a6;font-size:13.5px;line-height:19px;letter-spacing:-0.2px;color:#666;padding-left:9px"><span style="display:inline-block;transform:scaleX(0.76);transform-origin:0 50%">0%</span></div>
<svg class="a" style="left:727px;top:332px" width="16" height="17"><path d="M1.8 2.2L13.6 8.3L1.8 14.7Z" fill="#2b8cf1" stroke="#2b8cf1" stroke-width="1.4" stroke-linejoin="round"/></svg>
<svg class="a" style="left:784px;top:332px" width="20" height="17" viewBox="0 0 20 17" fill="none" stroke="#a2a2a2" stroke-width="1.1"><path d="M1.5 14.5V1.5H6.5V3.5H14.5V5"/><path d="M1.5 14.5H14.5L17.6 5H6.2L3 14.5"/></svg>
<svg class="a" style="left:845px;top:330px" width="18" height="20" viewBox="0 0 18 20" fill="none" stroke="#a8a8a8" stroke-width="1.1"><path d="M6.2 2.5H11.8M1 4.5H17"/><path d="M3.5 7V17.5H14.5V7"/><path d="M7.5 9V15M10.5 9V15"/></svg>
<svg class="a" style="left:913px;top:333px" width="5" height="16"><circle cx="2.5" cy="2.3" r="1.45" fill="#a3a3a3"/><circle cx="2.5" cy="7.4" r="1.45" fill="#a3a3a3"/><circle cx="2.5" cy="12.5" r="1.45" fill="#a3a3a3"/></svg>
<div class="a nw" style="left:4px;top:371px;width:60px;text-align:center;font-size:14px;line-height:18px;color:#555">10</div>
<div class="a" style="left:63px;top:367px;width:25px;height:25px;background:#3b8ad8;border:1px solid #2f7ed0;border-radius:2px;color:#fff;font-size:15px;line-height:23px;text-align:center">W</div>
<div class="a nw" style="left:98px;top:372px;font-size:14.5px;line-height:18px;letter-spacing:-0.12px;color:#606060">Word转为PPT - 副本 (11...</div>
<div class="a nw" style="left:283px;top:371px;width:60px;text-align:center;font-size:14px;line-height:18px;color:#555">2</div>
<div class="a" style="left:389px;top:368px;width:64px;height:24px;border:1px solid #dfe3ea;border-radius:2px;text-align:center;font-size:13px;line-height:24px;color:#4a4a4a">全部</div>
<div class="a" style="left:497px;top:370px;width:197px;height:20px;border:1px solid #a6a6a6;font-size:13.5px;line-height:19px;letter-spacing:-0.2px;color:#666;padding-left:9px"><span style="display:inline-block;transform:scaleX(0.76);transform-origin:0 50%">0%</span></div>
<svg class="a" style="left:727px;top:372px" width="16" height="17"><path d="M1.8 2.2L13.6 8.3L1.8 14.7Z" fill="#2b8cf1" stroke="#2b8cf1" stroke-width="1.4" stroke-linejoin="round"/></svg>
<svg class="a" style="left:784px;top:372px" width="20" height="17" viewBox="0 0 20 17" fill="none" stroke="#a2a2a2" stroke-width="1.1"><path d="M1.5 14.5V1.5H6.5V3.5H14.5V5"/><path d="M1.5 14.5H14.5L17.6 5H6.2L3 14.5"/></svg>
<svg class="a" style="left:845px;top:370px" width="18" height="20" viewBox="0 0 18 20" fill="none" stroke="#a8a8a8" stroke-width="1.1"><path d="M6.2 2.5H11.8M1 4.5H17"/><path d="M3.5 7V17.5H14.5V7"/><path d="M7.5 9V15M10.5 9V15"/></svg>
<svg class="a" style="left:913px;top:373px" width="5" height="16"><circle cx="2.5" cy="2.3" r="1.45" fill="#a3a3a3"/><circle cx="2.5" cy="7.4" r="1.45" fill="#a3a3a3"/><circle cx="2.5" cy="12.5" r="1.45" fill="#a3a3a3"/></svg>
<div class="a nw" style="left:4px;top:411px;width:60px;text-align:center;font-size:14px;line-height:18px;color:#555">11</div>
<div class="a" style="left:63px;top:407px;width:25px;height:25px;background:#3b8ad8;border:1px solid #2f7ed0;border-radius:2px;color:#fff;font-size:15px;line-height:23px;text-align:center">W</div>
<div class="a nw" style="left:98px;top:412px;font-size:14.5px;line-height:18px;letter-spacing:-0.12px;color:#606060">Word转为PPT - 副本 (12...</div>
<div class="a nw" style="left:283px;top:411px;width:60px;text-align:center;font-size:14px;line-height:18px;color:#555">2</div>
<div class="a" style="left:389px;top:408px;width:64px;height:24px;border:1px solid #dfe3ea;border-radius:2px;text-align:center;font-size:13px;line-height:24px;color:#4a4a4a">全部</div>
<div class="a" style="left:497px;top:410px;width:197px;height:20px;border:1px solid #a6a6a6;font-size:13.5px;line-height:19px;letter-spacing:-0.2px;color:#666;padding-left:9px"><span style="display:inline-block;transform:scaleX(0.76);transform-origin:0 50%">0%</span></div>
<svg class="a" style="left:727px;top:412px" width="16" height="17"><path d="M1.8 2.2L13.6 8.3L1.8 14.7Z" fill="#2b8cf1" stroke="#2b8cf1" stroke-width="1.4" stroke-linejoin="round"/></svg>
<svg class="a" style="left:784px;top:412px" width="20" height="17" viewBox="0 0 20 17" fill="none" stroke="#a2a2a2" stroke-width="1.1"><path d="M1.5 14.5V1.5H6.5V3.5H14.5V5"/><path d="M1.5 14.5H14.5L17.6 5H6.2L3 14.5"/></svg>
<svg class="a" style="left:845px;top:410px" width="18" height="20" viewBox="0 0 18 20" fill="none" stroke="#a8a8a8" stroke-width="1.1"><path d="M6.2 2.5H11.8M1 4.5H17"/><path d="M3.5 7V17.5H14.5V7"/><path d="M7.5 9V15M10.5 9V15"/></svg>
<svg class="a" style="left:913px;top:413px" width="5" height="16"><circle cx="2.5" cy="2.3" r="1.45" fill="#a3a3a3"/><circle cx="2.5" cy="7.4" r="1.45" fill="#a3a3a3"/><circle cx="2.5" cy="12.5" r="1.45" fill="#a3a3a3"/></svg>
<div class="a nw" style="left:4px;top:451px;width:60px;text-align:center;font-size:14px;line-height:18px;color:#555">12</div>
<div class="a" style="left:63px;top:447px;width:25px;height:25px;background:#3b8ad8;border:1px solid #2f7ed0;border-radius:2px;color:#fff;font-size:15px;line-height:23px;text-align:center">W</div>
<div class="a nw" style="left:98px;top:452px;font-size:14.5px;line-height:18px;letter-spacing:-0.12px;color:#606060">Word转为PPT - 副本 (13...</div>
<div class="a nw" style="left:283px;top:451px;width:60px;text-align:center;font-size:14px;line-height:18px;color:#555">2</div>
<div class="a" style="left:389px;top:448px;width:64px;height:24px;border:1px solid #dfe3ea;border-radius:2px;text-align:center;font-size:13px;line-height:24px;color:#4a4a4a">全部</div>
<div class="a" style="left:497px;top:450px;width:197px;height:20px;border:1px solid #a6a6a6;font-size:13.5px;line-height:19px;letter-spacing:-0.2px;color:#666;padding-left:9px"><span style="display:inline-block;transform:scaleX(0.76);transform-origin:0 50%">0%</span></div>
<svg class="a" style="left:727px;top:452px" width="16" height="17"><path d="M1.8 2.2L13.6 8.3L1.8 14.7Z" fill="#2b8cf1" stroke="#2b8cf1" stroke-width="1.4" stroke-linejoin="round"/></svg>
<svg class="a" style="left:784px;top:452px" width="20" height="17" viewBox="0 0 20 17" fill="none" stroke="#a2a2a2" stroke-width="1.1"><path d="M1.5 14.5V1.5H6.5V3.5H14.5V5"/><path d="M1.5 14.5H14.5L17.6 5H6.2L3 14.5"/></svg>
<svg class="a" style="left:845px;top:450px" width="18" height="20" viewBox="0 0 18 20" fill="none" stroke="#a8a8a8" stroke-width="1.1"><path d="M6.2 2.5H11.8M1 4.5H17"/><path d="M3.5 7V17.5H14.5V7"/><path d="M7.5 9V15M10.5 9V15"/></svg>
<svg class="a" style="left:913px;top:453px" width="5" height="16"><circle cx="2.5" cy="2.3" r="1.45" fill="#a3a3a3"/><circle cx="2.5" cy="7.4" r="1.45" fill="#a3a3a3"/><circle cx="2.5" cy="12.5" r="1.45" fill="#a3a3a3"/></svg>
<div class="a nw" style="left:4px;top:491px;width:60px;text-align:center;font-size:14px;line-height:18px;color:#555">13</div>
<div class="a" style="left:63px;top:487px;width:25px;height:25px;background:#3b8ad8;border:1px solid #2f7ed0;border-radius:2px;color:#fff;font-size:15px;line-height:23px;text-align:center">W</div>
<div class="a nw" style="left:98px;top:492px;font-size:14.5px;line-height:18px;letter-spacing:-0.12px;color:#606060">Word转为PPT - 副本 (14...</div>
<div class="a nw" style="left:283px;top:491px;width:60px;text-align:center;font-size:14px;line-height:18px;color:#555">2</div>
<div class="a" style="left:389px;top:488px;width:64px;height:24px;border:1px solid #dfe3ea;border-radius:2px;text-align:center;font-size:13px;line-height:24px;color:#4a4a4a">全部</div>
<div class="a" style="left:497px;top:490px;width:197px;height:20px;border:1px solid #a6a6a6;font-size:13.5px;line-height:19px;letter-spacing:-0.2px;color:#666;padding-left:9px"><span style="display:inline-block;transform:scaleX(0.76);transform-origin:0 50%">0%</span></div>
<svg class="a" style="left:727px;top:492px" width="16" height="17"><path d="M1.8 2.2L13.6 8.3L1.8 14.7Z" fill="#2b8cf1" stroke="#2b8cf1" stroke-width="1.4" stroke-linejoin="round"/></svg>
<svg class="a" style="left:784px;top:492px" width="20" height="17" viewBox="0 0 20 17" fill="none" stroke="#a2a2a2" stroke-width="1.1"><path d="M1.5 14.5V1.5H6.5V3.5H14.5V5"/><path d="M1.5 14.5H14.5L17.6 5H6.2L3 14.5"/></svg>
<svg class="a" style="left:845px;top:490px" width="18" height="20" viewBox="0 0 18 20" fill="none" stroke="#a8a8a8" stroke-width="1.1"><path d="M6.2 2.5H11.8M1 4.5H17"/><path d="M3.5 7V17.5H14.5V7"/><path d="M7.5 9V15M10.5 9V15"/></svg>
<svg class="a" style="left:913px;top:493px" width="5" height="16"><circle cx="2.5" cy="2.3" r="1.45" fill="#a3a3a3"/><circle cx="2.5" cy="7.4" r="1.45" fill="#a3a3a3"/><circle cx="2.5" cy="12.5" r="1.45" fill="#a3a3a3"/></svg>
</div>
<div class="a" style="left:200px;top:686px;width:958px;height:79px;background:#fefefe;border-top:1px solid #e6e6e6"></div>
<div class="a nw" style="left:216px;top:718px;font-size:13px;line-height:18px;color:#666">输出目录<span style="margin-left:5px">:</span></div>
<div class="a" style="left:293px;top:719px;width:14px;height:14px;border-radius:50%;border:1px solid #e3e3e3;background:#fff"></div>
<div class="a" style="left:296px;top:722px;width:8px;height:8px;border-radius:50%;background:#2b82ee"></div>
<div class="a nw" style="left:313px;top:718px;font-size:13px;line-height:18px;color:#333">原文件夹目录</div>
<div class="a" style="left:405px;top:719px;width:14px;height:14px;border-radius:50%;border:1px solid #e3e3e3;background:#fff"></div>
<div class="a nw" style="left:425px;top:718px;font-size:13px;line-height:18px;color:#333">自定义<span style="margin-left:3px">:</span></div>
<div class="a" style="left:480px;top:715px;width:241px;height:24px;border:1px solid #d5d5d5;background:#fff;font-size:12px;line-height:22px;color:#999;padding-left:3px">D:\ZM</div>
<div class="a" style="left:720px;top:715px;width:40px;height:24px;background:#55a8f8;border-radius:0 2px 2px 0;color:#fff;font-size:12px;line-height:24px;text-align:center">浏览</div>
<div class="a" style="left:771px;top:715px;width:100px;height:24px;background:#55a8f8;border-radius:2px;color:#fff;font-size:12px;line-height:24px;text-align:center">打开文件目录</div>
<div class="a" style="left:933px;top:697px;width:210px;height:60px;background:#0270fd;border-radius:2px"></div>
<svg class="a" style="left:971px;top:715px" width="26" height="25" viewBox="0 0 26 25" fill="none" stroke="#fff" stroke-width="2"><rect x="2" y="1.5" width="22" height="22"/><path d="M10 7.5L17 12.5L10 17.5Z" fill="#fff" stroke-width="1"/></svg>
<div class="a nw" style="left:1014px;top:713px;font-size:23.2px;line-height:28px;color:#fff">开始转换</div>
<svg class="a" style="left:1029px;top:729px" width="21" height="27" viewBox="0 0 21 27"><path d="M6.5 3.2Q8 1 9.7 3.2V8.2Q11.2 6.6 12.7 8.2Q14.2 7.1 15.7 8.7Q17.2 8 18.7 9.7V18.5Q18.7 22.5 15.7 24.6H9.8Q7.2 23.6 5.2 20.2L1.9 15.6Q1.1 14 2.6 13.6Q4.2 13.3 6.5 16.2Z" fill="#fff" stroke="#111" stroke-width="1.1" stroke-linejoin="round"/><path d="M9.7 8.5V13M12.7 8.5V13M15.7 9V13" stroke="#111" stroke-width="1"/></svg>
</body></html>
